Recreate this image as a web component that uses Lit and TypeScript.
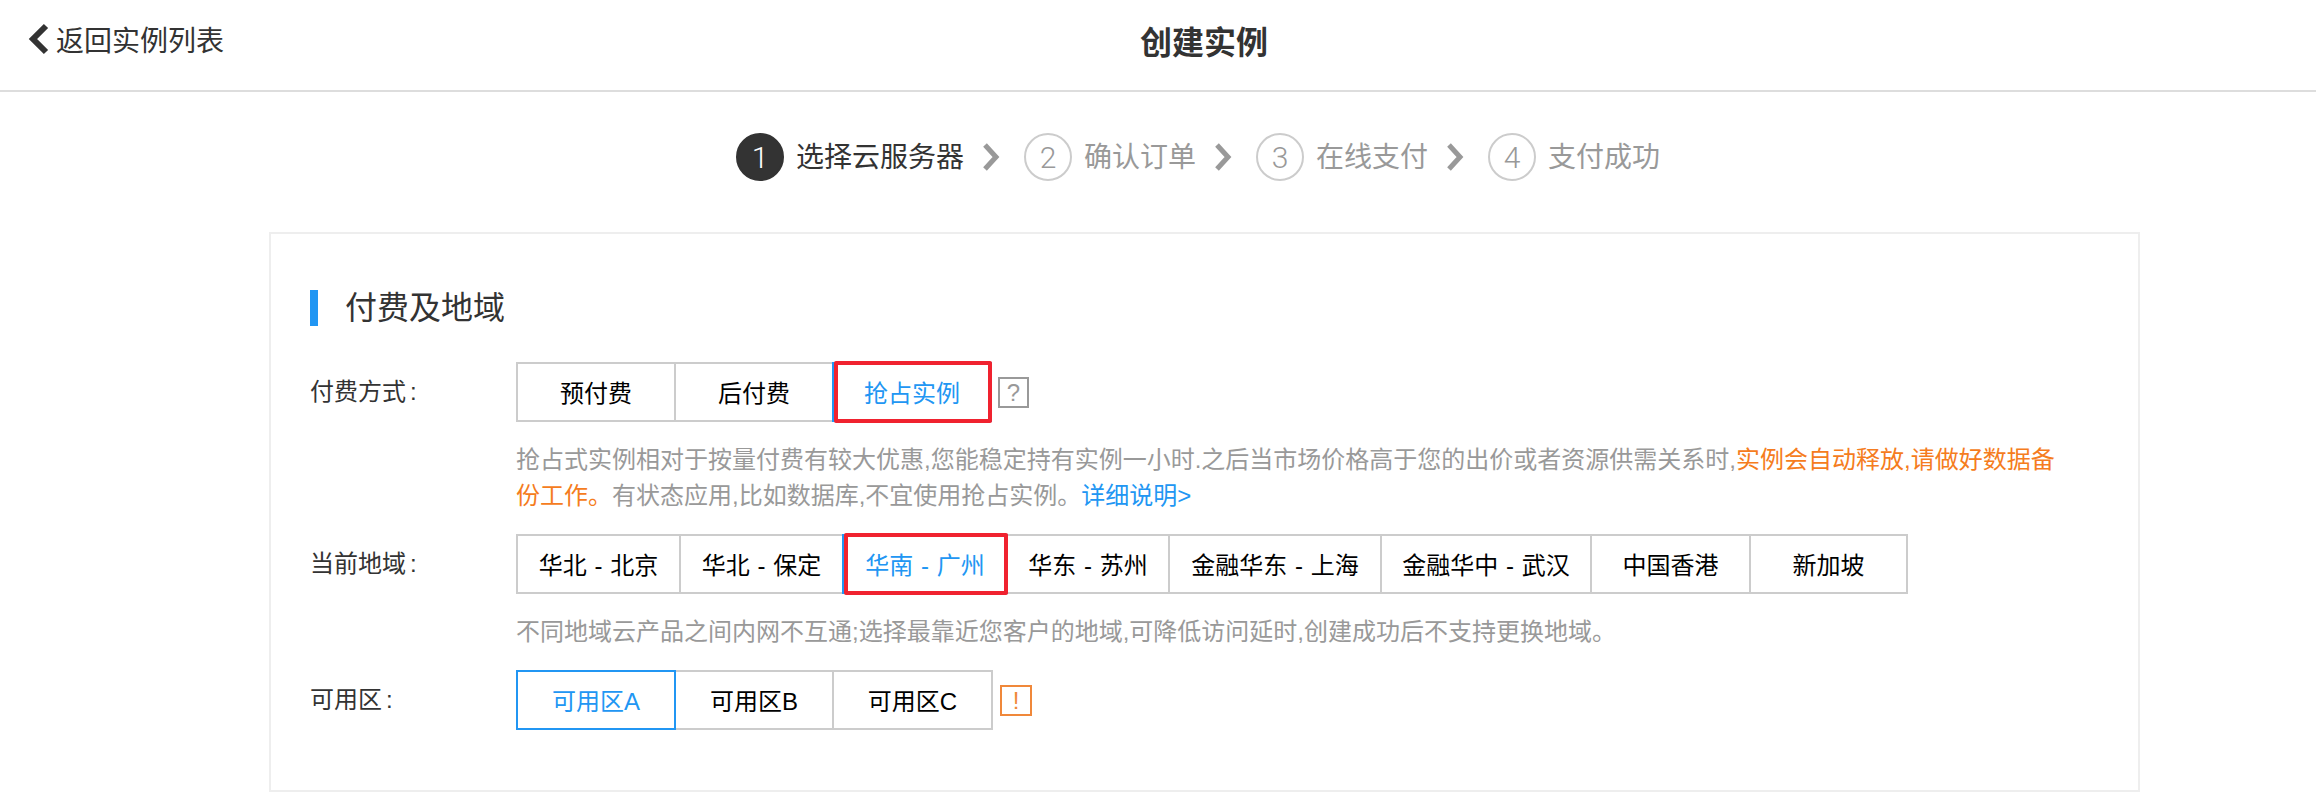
import { LitElement, html, css } from 'lit';
import { customElement } from 'lit/decorators.js';

type Option = { label: string; width: number; selected?: boolean; marked?: boolean };

const STEPS = ['选择云服务器', '确认订单', '在线支付', '支付成功'];

const BILLING: Option[] = [
  { label: '预付费', width: 160 },
  { label: '后付费', width: 160 },
  { label: '抢占实例', width: 160, selected: true, marked: true },
];

const REGIONS: Option[] = [
  { label: '华北 - 北京', width: 165 },
  { label: '华北 - 保定', width: 165 },
  { label: '华南 - 广州', width: 166, selected: true, marked: true },
  { label: '华东 - 苏州', width: 164 },
  { label: '金融华东 - 上海', width: 214 },
  { label: '金融华中 - 武汉', width: 212 },
  { label: '中国香港', width: 161 },
  { label: '新加坡', width: 159 },
];

const ZONES: Option[] = [
  { label: '可用区A', width: 160, selected: true },
  { label: '可用区B', width: 160 },
  { label: '可用区C', width: 161 },
];

@customElement('app-root')
export class AppRoot extends LitElement {
  optionGroup(options: Option[]) {
    return html`<div class="options">
      ${options.map(
        option => html`<div
          class="option ${option.selected ? 'selected' : ''} ${option.marked ? 'marked' : ''}"
          style="width: ${option.width}px"
        >
          ${option.label}
        </div>`
      )}
    </div>`;
  }

  render() {
    return html`
      <header class="top">
        <a class="back">
          <svg width="22" height="32" viewBox="0 0 22 32">
            <polyline points="18,3 5,16 18,29" fill="none" stroke="#333" stroke-width="6" />
          </svg>
          返回实例列表
        </a>
        <h1 class="title">创建实例</h1>
      </header>

      <ol class="steps">
        ${STEPS.map(
          (step, index) => html`
            ${index > 0
              ? html`<svg class="arrow" width="18" height="28" viewBox="0 0 18 28">
                  <polyline points="3,2 14,14 3,26" fill="none" stroke="#999" stroke-width="5" />
                </svg>`
              : ''}
            <li class="step ${index === 0 ? 'active' : ''}">
              <span class="num">${index + 1}</span><span class="step-name">${step}</span>
            </li>
          `
        )}
      </ol>

      <section class="card">
        <h2 class="heading">付费及地域</h2>

        <div class="row">
          <span class="label">付费方式<span class="colon">:</span></span>
          ${this.optionGroup(BILLING)}
          <span class="hint">?</span>
        </div>
        <p class="desc">
          抢占式实例相对于按量付费有较大优惠,您能稳定持有实例一小时.之后当市场价格高于您的出价或者资源供需关系时,<span
            class="warn"
            >实例会自动释放,请做好数据备份工作。</span
          >有状态应用,比如数据库,不宜使用抢占实例。<a class="more">详细说明&gt;</a>
        </p>

        <div class="row">
          <span class="label">当前地域<span class="colon">:</span></span>
          ${this.optionGroup(REGIONS)}
        </div>
        <p class="desc">不同地域云产品之间内网不互通;选择最靠近您客户的地域,可降低访问延时,创建成功后不支持更换地域。</p>

        <div class="row">
          <span class="label">可用区<span class="colon">:</span></span>
          ${this.optionGroup(ZONES)}
          <span class="hint alert">!</span>
        </div>
      </section>
    `;
  }

  static styles = [
    css`
      :host {
        display: block;
        height: 800px;
        overflow: hidden;
        background: #fff;
        color: #333;
        font-family: 'Liberation Sans', 'Noto Sans CJK SC', sans-serif;
      }

      .top {
        display: flex;
        align-items: center;
        height: 90px;
        border-bottom: 2px solid #ddd;
      }

      .back {
        display: flex;
        align-items: center;
        gap: 6px;
        box-sizing: border-box;
        width: 1140px;
        padding: 0 0 12px 28px;
        font-size: 28px;
      }

      .title {
        margin: 0 0 10px;
        font-size: 32px;
        font-weight: 600;
      }

      .steps {
        display: flex;
        align-items: center;
        margin: 0;
        padding: 40px 0 0 736px;
        list-style: none;
      }

      .step {
        display: flex;
        align-items: center;
        gap: 12px;
        font-size: 28px;
        line-height: 48px;
        color: #999;
      }

      .step.active {
        color: #333;
      }

      .step-name {
        padding-top: 2px;
      }

      .num {
        box-sizing: border-box;
        width: 48px;
        height: 48px;
        border: 2px solid #ccc;
        border-radius: 50%;
        text-align: center;
        line-height: 46px;
        font-family: Roboto, sans-serif;
        font-size: 30px;
        font-weight: 300;
      }

      .active .num {
        border-color: #333;
        background: #333;
        color: #fff;
      }

      .arrow {
        margin: 0 24px 0 18px;
      }

      .card {
        box-sizing: border-box;
        width: 1871px;
        height: 560px;
        margin: 50px 0 0 269px;
        padding: 56px 39px 0;
        border: 2px solid #eee;
      }

      .heading {
        margin: 0 0 36px;
        padding-left: 27px;
        border-left: 8px solid #2196f3;
        font-size: 32px;
        font-weight: 400;
        line-height: 36px;
      }

      .row {
        display: flex;
        align-items: center;
      }

      .label {
        width: 206px;
        flex: none;
        padding-bottom: 5px;
        font-size: 24px;
      }

      .colon {
        margin-left: 4px;
      }

      .options {
        display: flex;
      }

      .option {
        box-sizing: border-box;
        height: 60px;
        margin-left: -2px;
        border: 2px solid #ccc;
        background: #fff;
        text-align: center;
        font-size: 24px;
        line-height: 60px;
        word-spacing: 1px;
        color: #000;
        position: relative;
      }

      .option:first-child {
        margin-left: 0;
      }

      .option.selected {
        z-index: 1;
        border-color: #2196f3;
        color: #2196f3;
      }

      .option.marked::after {
        content: '';
        position: absolute;
        inset: -3px -2px -3px 0;
        border: 4px solid #f0222f;
        border-radius: 2px;
      }

      .hint {
        box-sizing: border-box;
        width: 31px;
        height: 31px;
        margin-left: 6px;
        border: 2px solid #999;
        text-align: center;
        font-size: 24px;
        line-height: 27px;
        color: #999;
      }

      .hint.alert {
        width: 32px;
        margin-left: 7px;
        border-color: #f0883a;
        color: #f0883a;
      }

      .desc {
        width: 1548px;
        margin: 20px 0 20px 206px;
        font-size: 24px;
        line-height: 36px;
        color: #999;
      }

      .warn {
        color: #f57c20;
      }

      .more {
        color: #2196f3;
      }
    `,
  ];
}
